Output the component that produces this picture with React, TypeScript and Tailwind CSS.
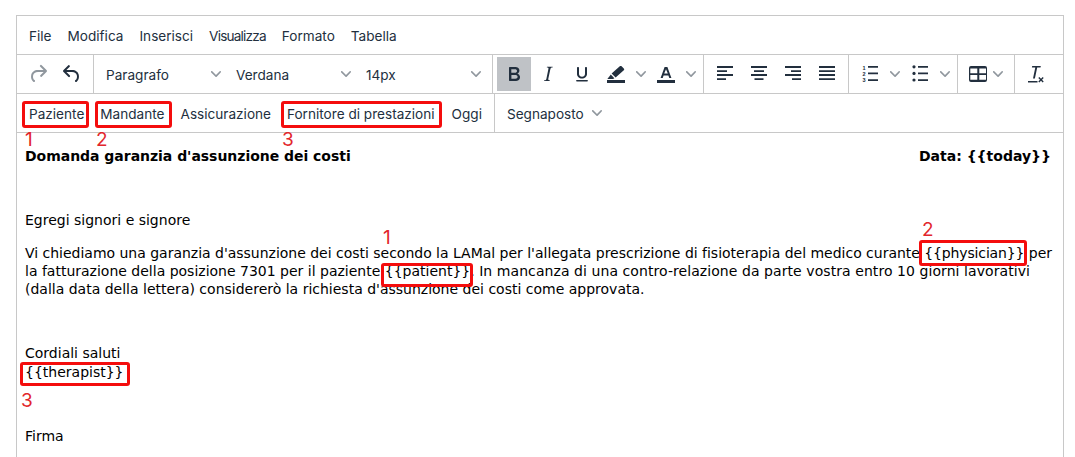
import React from "react";

const INK = "#222f3e";

function Chevron() {
  return (
    <svg width="10" height="10" viewBox="0 0 10 10" fill={INK} fillOpacity={0.5} className="shrink-0">
      <path d="M8.7 2.2c.3-.3.8-.3 1 0 .4.4.4.9 0 1.2L5.7 7.8c-.3.3-.9.3-1.2 0L.2 3.4a.8.8 0 0 1 0-1.2c.3-.3.8-.3 1.1 0L5 6l3.7-3.8z" />
    </svg>
  );
}

function Icon({ children, faded }: { children: React.ReactNode; faded?: boolean }) {
  return (
    <svg width="24" height="24" viewBox="0 0 24 24" fill={INK} fillOpacity={faded ? 0.5 : 1}>
      {children}
    </svg>
  );
}

function Btn({ children, active }: { children: React.ReactNode; active?: boolean }) {
  return (
    <div className={`w-[34px] h-[34px] flex items-center justify-center ${active ? "bg-[#bfc2c6]" : ""}`}>{children}</div>
  );
}

function Split({ children }: { children: React.ReactNode }) {
  return (
    <>
      <Btn>{children}</Btn>
      <div className="w-[16px] h-[34px] flex items-center justify-center">
        <Chevron />
      </div>
    </>
  );
}

function Select({ label }: { label: string }) {
  return (
    <div className="w-[130px] h-[34px] pl-[8px] pr-[7px] flex items-center justify-between">
      <span className="pt-[2px]">{label}</span>
      <Chevron />
    </div>
  );
}

function Group({ children, first }: { children: React.ReactNode; first?: boolean }) {
  return (
    <div className={`flex items-center px-[4px] h-full ${first ? "" : "border-l border-[#c8c8c8]"}`}>{children}</div>
  );
}

function Row({ children }: { children: React.ReactNode }) {
  return <div className="flex h-[39px] border-b border-[#c8c8c8]">{children}</div>;
}

function TextBtn({ children }: { children: React.ReactNode }) {
  return <div className="px-[8px] h-[34px] pt-[2px] flex items-center whitespace-nowrap">{children}</div>;
}

const box = "absolute border-[3px] border-[#f40d0d] rounded-[3px]";
const num = "absolute text-[#e2262c] text-[19px] leading-[20px]";

export default function App() {
  return (
    <div className="relative h-[457px] overflow-hidden bg-white font-['Inter',sans-serif] text-[13.6px] text-[#222f3e]">
      <div className="ml-[16px] mt-[15px] w-[1048px] h-[600px] border border-[#c8c8c8] absolute">
        <div className="flex items-center h-[38px] pl-[4px] border-b border-[#c8c8c8] box-content">
          <TextBtn>File</TextBtn>
          <TextBtn>Modifica</TextBtn>
          <TextBtn>Inserisci</TextBtn>
          <TextBtn>
            <span className="tracking-[-0.8px]">Visualizza</span>
          </TextBtn>
          <TextBtn>Formato</TextBtn>
          <TextBtn>Tabella</TextBtn>
        </div>

        <Row>
          <Group first>
            <Btn>
              <Icon faded>
                <path d="M17.6 10H12c-2.8 0-4.4 1.4-4.9 3.5-.4 2 .3 4 1.4 4.6a1 1 0 1 1-1 1.8c-2-1.2-2.9-4.1-2.3-6.8.6-3 3-5.1 6.8-5.1h5.6l-3.3-3.3a1 1 0 1 1 1.4-1.4l5 5a1 1 0 0 1 0 1.4l-5 5a1 1 0 0 1-1.4-1.4l3.3-3.3z" />
              </Icon>
            </Btn>
            <Btn>
              <Icon>
                <path d="M6.4 8H12c3.7 0 6.2 2 6.8 5.1.6 2.7-.4 5.6-2.3 6.8a1 1 0 0 1-1-1.8c1.1-.6 1.8-2.7 1.4-4.6-.5-2.1-2.1-3.5-4.900-3.500H6.400l3.300 3.300a1 1 0 1 1-1.400 1.400l-5-5a1 1 0 0 1 0-1.400l5-5a1 1 0 0 1 1.400 1.400L6.400 8z" />
              </Icon>
            </Btn>
          </Group>
          <Group>
            <Select label="Paragrafo" />
            <Select label="Verdana" />
            <Select label="14px" />
          </Group>
          <Group>
            <Btn active>
              <Icon>
                <path d="M7.8 19c-.3 0-.5 0-.6-.2l-.2-.5V5.700c0-.2 0-.4.2-.5l.6-.2h5c1.500 0 2.700.3 3.500 1 .7.6 1.100 1.400 1.100 2.500a3 3 0 0 1-.6 1.900c-.4.6-1 1-1.600 1.200.4.1.9.3 1.300.6s.8.7 1 1.200c.4.4.5 1 .5 1.600 0 1.300-.4 2.300-1.300 3-.8.7-2.100 1-3.800 1H7.800zm5-8.300c.6 0 1.200-.1 1.600-.5.4-.3.6-.7.6-1.300 0-1.100-.8-1.700-2.300-1.700H9.300v3.500h3.400zm.5 6c.7 0 1.300-.1 1.700-.4.4-.4.6-.9.6-1.500s-.2-1-.7-1.400c-.4-.3-1-.4-2-.4H9.400v3.800h4z" />
              </Icon>
            </Btn>
            <Btn>
              <Icon>
                <path d="M16.7 4.7l-.1.9h-.3c-.6 0-1 0-1.4.3-.3.3-.4.6-.5 1.100l-2.100 9.800v.6c0 .5.4.8 1.400.8h.2l-.2.8H8l.2-.8h.2c1.100 0 1.800-.5 2-1.500l2-9.800.1-.5c0-.6-.4-.8-1.400-.8h-.3l.2-.9h5.800z" />
              </Icon>
            </Btn>
            <Btn>
              <Icon>
                <path d="M16 5c.6 0 1 .4 1 1v6c0 2.600-2.200 4.500-5 4.500S7 14.600 7 12V6c0-.6.4-1 1-1s1 .4 1 1v6c0 1.500 1.300 2.700 3 2.700s3-1.200 3-2.700V6c0-.6.4-1 1-1zM7 18h10c.6 0 1 .3 1 .8s-.4.8-1 .8H7c-.6 0-1-.3-1-.8s.4-.8 1-.8z" />
              </Icon>
            </Btn>
            <Split>
              <Icon>
                <path d="M15.800 4.300c.5-.5 1.300-.5 1.800 0l2.200 2.200c.5.5.5 1.300 0 1.800l-8.200 7.300-4-4.100 8.200-7.200z" />
                <path d="M6.800 12.600l3.600 3.700-1.400.7H3.400z" />
                <path d="M3 18h18v3H3z" />
              </Icon>
            </Split>
            <Split>
              <Icon>
                <path fillRule="evenodd" d="M10.600 5h2.800l4 11h-2.100l-.9-2.600H9.600L8.700 16H6.600l4-11zm1.400 2.300l-1.800 4.300h3.600L12 7.300z" />
                <path d="M3 18h18v3H3z" />
              </Icon>
            </Split>
          </Group>
          <Group>
            <Btn>
              <Icon>
                <path d="M4 4h16v2H4zM4 8.300h10v1.700H4zM4 12h16v2H4zM4 16.300h9V18H4z" />
              </Icon>
            </Btn>
            <Btn>
              <Icon>
                <path d="M4 4h16v2H4zM7 8.300h10v1.700H7zM4 12h16v2H4zM7.500 16.300h9V18h-9z" />
              </Icon>
            </Btn>
            <Btn>
              <Icon>
                <path d="M4 4h16v2H4zM10 8.300h10v1.700H10zM4 12h16v2H4zM11 16.300h9V18h-9z" />
              </Icon>
            </Btn>
            <Btn>
              <Icon>
                <path d="M4 4h16v2H4zM4 8.300h16v1.700H4zM4 12h16v2H4zM4 16.300h16V18H4z" />
              </Icon>
            </Btn>
          </Group>
          <Group>
            <Split>
              <Icon>
                <path d="M10 4h10v1.700H10zM10 10.600h10v1.700H10zM10 17.200h10v1.700H10z" />
                <text x="4.600" y="7.600" fontSize="5.500" fontWeight="700" fontFamily="'Liberation Sans',sans-serif">1</text>
                <text x="4.600" y="14" fontSize="5.500" fontWeight="700" fontFamily="'Liberation Sans',sans-serif">2</text>
                <text x="4.600" y="20.400" fontSize="5.500" fontWeight="700" fontFamily="'Liberation Sans',sans-serif">3</text>
              </Icon>
            </Split>
            <Split>
              <Icon>
                <path d="M10 4h10v1.700H10zM10 10.600h10v1.700H10zM10 17.200h10v1.700H10z" />
                <circle cx="6" cy="4.800" r="1.600" />
                <circle cx="6" cy="11.400" r="1.600" />
                <circle cx="6" cy="18" r="1.600" />
              </Icon>
            </Split>
          </Group>
          <Group>
            <div className="w-[48px] h-[34px] flex items-center pl-[4px]">
              <Icon>
                <path fillRule="evenodd" d="M5 4h14a2 2 0 0 1 2 2v12a2 2 0 0 1-2 2H5a2 2 0 0 1-2-2V6a2 2 0 0 1 2-2zm-.7 2.500v4.800h7v-4.800h-7zm9 0v4.800h6.700v-4.800h-6.700zm-9 6.500v4.800h7V13h-7zm9 0v4.800h6.700V13h-6.700z" />
              </Icon>
              <div className="ml-[3px]">
                <Chevron />
              </div>
            </div>
          </Group>
          <Group>
            <Btn>
              <Icon>
                <path d="M8.200 4h8.600l-.3 1.400h-3.300l-2.300 11H9l2.300-11H7.900z" />
                <path d="M4 19h9.500v1.500H4z" />
                <path d="M15.300 15l1.700 1.700 1.700-1.700 1 1-1.700 1.700 1.700 1.700-1 1-1.700-1.700-1.700 1.700-1-1 1.700-1.700-1.700-1.700z" />
              </Icon>
            </Btn>
          </Group>
        </Row>

        <Row>
          <Group first>
            <TextBtn>Paziente</TextBtn>
            <TextBtn>Mandante</TextBtn>
            <TextBtn>Assicurazione</TextBtn>
            <TextBtn>Fornitore di prestazioni</TextBtn>
            <div className="ml-px">
              <TextBtn>Oggi</TextBtn>
            </div>
          </Group>
          <Group>
            <div className="flex items-center h-[34px] pl-[8px] gap-[8px]">
              <span className="pt-[2px]">Segnaposto</span>
              <Chevron />
            </div>
          </Group>
        </Row>

        <div className="pl-[8px] pr-[12px] whitespace-nowrap font-['DejaVu_Sans','Verdana',sans-serif] text-[14px] leading-[18px] text-black">
          <p className="mt-[14px] mb-[14px] flex justify-between font-bold">
            <span className="tracking-[-0.03px]">Domanda garanzia d'assunzione dei costi</span>
            <span>Data: {"{{today}}"}</span>
          </p>
          <p className="h-[18px] mb-[14px]"></p>
          <p className="mb-[15px]">Egregi signori e signore</p>
          <p className="mb-[14px]">
            <span className="tracking-[-0.015px]">
              Vi chiediamo una garanzia d'assunzione dei costi secondo la LAMal per l'allegata prescrizione di fisioterapia del medico curante
            </span>{" "}
            <span className="tracking-[-0.15px]">{"{{physician}}"}</span> per
            <br />
            la fatturazione della posizione 7301 per il paziente {"{{patient}}"}.{" "}
            <span className="tracking-[0.07px]">In mancanza di una contro-relazione da parte vostra entro 10 giorni lavorativi</span>
            <br />
            (dalla data della lettera) considererò la richiesta d'assunzione dei costi come approvata.
          </p>
          <p className="h-[18px] mb-[14px]"></p>
          <p>Cordiali saluti</p>
          <p className="leading-[20px] mb-[13px]">{"{{therapist}}"}</p>
          <p className="h-[18px] mb-[14px]"></p>
          <p>Firma</p>
        </div>
      </div>

      <div className={`${box} left-[22px] top-[101px] w-[67px] h-[27px]`} />
      <div className={`${box} left-[95px] top-[101px] w-[77px] h-[27px]`} />
      <div className={`${box} left-[281px] top-[101px] w-[161px] h-[27px]`} />
      <div className={`${box} left-[381px] top-[263px] w-[92px] h-[24px]`} />
      <div className={`${box} left-[919px] top-[240px] w-[108px] h-[26px]`} />
      <div className={`${box} left-[20px] top-[362px] w-[110px] h-[24px]`} />
      <span className={`${num} left-[25px] top-[130px]`}>1</span>
      <span className={`${num} left-[96px] top-[130px]`}>2</span>
      <span className={`${num} left-[282px] top-[130px]`}>3</span>
      <span className={`${num} left-[383px] top-[228px]`}>1</span>
      <span className={`${num} left-[922px] top-[220px]`}>2</span>
      <span className={`${num} left-[21px] top-[391px]`}>3</span>
    </div>
  );
}
